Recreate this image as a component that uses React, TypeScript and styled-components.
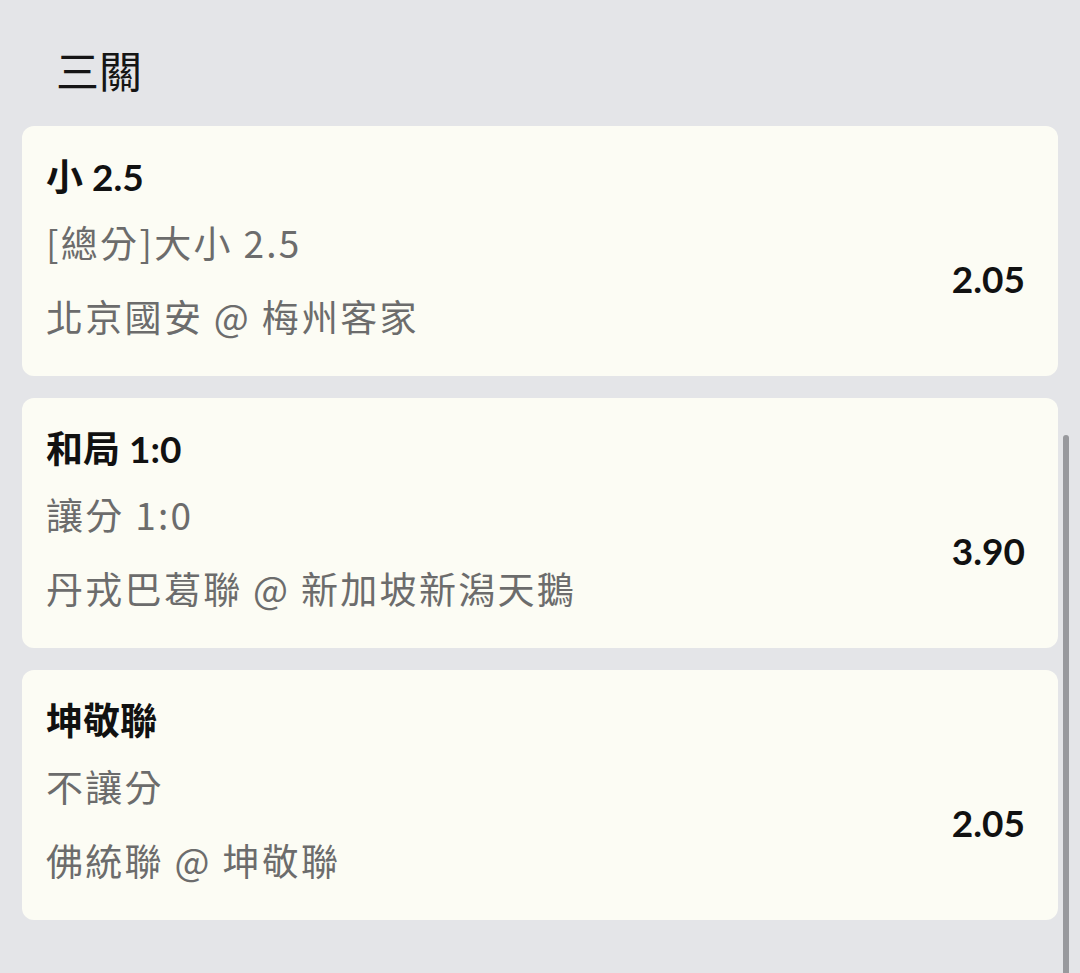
import React from "react";
import styled, { createGlobalStyle } from "styled-components";

const Global = createGlobalStyle`
  html, body { margin: 0; padding: 0; background: #e4e5e8; }
  body { font-family: Lato, "Noto Sans CJK TC", sans-serif; }
`;

const Page = styled.div`
  position: relative;
  min-height: 973px;
  padding: 0 22px;
  box-sizing: border-box;
  overflow: hidden;
`;

const Heading = styled.h1`
  margin: 0 0 32px;
  padding: 44px 0 0 34px;
  font-size: 43px;
  line-height: 50px;
  font-weight: 400;
  color: #151515;
  font-family: "Noto Sans CJK TC", sans-serif;
`;

const List = styled.div`
  display: flex;
  flex-direction: column;
  gap: 22px;
`;

const Card = styled.div`
  background: #fcfcf4;
  border-radius: 12px;
  height: 250px;
  box-sizing: border-box;
  padding: 26px 33px 0 24px;
  display: grid;
  grid-template-columns: 1fr auto;
  grid-template-rows: 50px 50px 50px;
`;

const Title = styled.div`
  grid-column: 1 / 3;
  grid-row: 1;
  font-size: 37px;
  line-height: 50px;
  font-weight: 700;
  color: #111;
`;

const Sub = styled.div<{ $row: number; $shift: number }>`
  grid-column: 1;
  grid-row: ${(p) => p.$row};
  margin-top: ${(p) => p.$shift}px;
  font-size: 37px;
  letter-spacing: 2.3px;
  line-height: 50px;
  color: #6c6c6c;
  font-family: "Noto Sans CJK TC", sans-serif;
`;

const Odds = styled.div`
  grid-column: 2;
  grid-row: 2 / 4;
  align-self: center;
  margin-top: 52px;
  font-size: 37px;
  font-weight: 700;
  color: #111;
`;

const Scrollbar = styled.div`
  position: absolute;
  right: 11px;
  top: 435px;
  width: 6px;
  height: 560px;
  border-radius: 3px;
  background: #98999d;
`;

const bets = [
  { title: "小 2.5", market: "[總分]大小 2.5", match: "北京國安 @ 梅州客家", odds: "2.05" },
  { title: "和局 1:0", market: "讓分 1:0", match: "丹戎巴葛聯 @ 新加坡新潟天鵝", odds: "3.90" },
  { title: "坤敬聯", market: "不讓分", match: "佛統聯 @ 坤敬聯", odds: "2.05" },
];

export default function App() {
  return (
    <Page>
      <Global />
      <Heading>三關</Heading>
      <List>
        {bets.map((b, i) => (
          <Card key={i}>
            <Title>{b.title}</Title>
            <Sub $row={2} $shift={15}>{b.market}</Sub>
            <Sub $row={3} $shift={39}>{b.match}</Sub>
            <Odds>{b.odds}</Odds>
          </Card>
        ))}
      </List>
      <Scrollbar />
    </Page>
  );
}
